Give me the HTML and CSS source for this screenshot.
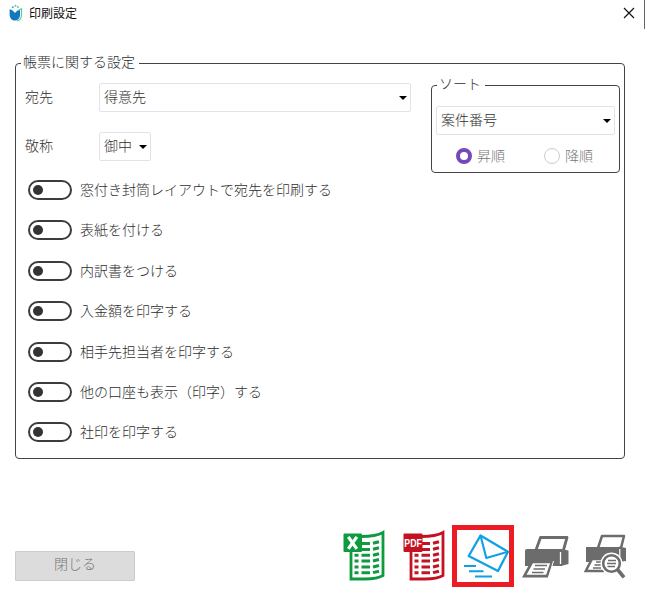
FILE: index.html
```html
<!DOCTYPE html>
<html lang="ja">
<head>
<meta charset="utf-8">
<title>印刷設定</title>
<link rel="stylesheet" href="styles.css">
</head>
<body>
<header class="titlebar">
  <svg class="logo" width="16" height="18" viewBox="0 0 16 18">
    <path d="M1.600 5.200C4 5.800 5.500 7 7 9C8.500 7 10 6 12 5.500V11.500C11.600 15 9.500 16.500 7 16.500C3.500 16.500 1.600 14 1.600 10Z" fill="#1478be"/>
    <circle cx="4.800" cy="3.200" r="1" fill="#3f9fd0"/><circle cx="7.500" cy="1.800" r="1" fill="#54bfd0"/><circle cx="10" cy="3" r="1" fill="#5cc9b0"/>
    <path d="M10 6.500L13.500 4.800V11C13.500 14 11.700 16.300 9 16.900" fill="none" stroke="#5cc9b0" stroke-width="1.200"/>
  </svg>
  <h1 class="title">印刷設定</h1>
  <svg class="close" width="12" height="12" viewBox="0 0 12 12"><path d="M1 1L11 11M11 1L1 11" stroke="#111" stroke-width="1.150"/></svg>
  <span class="edge"></span>
</header>
<main>
  <fieldset class="panel">
    <legend>帳票に関する設定</legend>
    <div class="top">
      <div class="fields">
        <div class="field"><span class="label">宛先</span><div class="select wide"><span>得意先</span><i class="caret"></i></div></div>
        <div class="field"><span class="label">敬称</span><div class="select small"><span>御中</span><i class="caret"></i></div></div>
      </div>
      <fieldset class="sort">
        <legend>ソート</legend>
        <div class="select"><span>案件番号</span><i class="caret"></i></div>
        <div class="radios">
          <span class="radio on"><i></i><span>昇順</span></span>
          <span class="radio"><i></i><span>降順</span></span>
        </div>
      </fieldset>
    </div>
    <ul class="toggles">
      <li><i class="switch"></i><span>窓付き封筒レイアウトで宛先を印刷する</span></li>
      <li><i class="switch"></i><span>表紙を付ける</span></li>
      <li><i class="switch"></i><span>内訳書をつける</span></li>
      <li><i class="switch"></i><span>入金額を印字する</span></li>
      <li><i class="switch"></i><span>相手先担当者を印字する</span></li>
      <li><i class="switch"></i><span>他の口座も表示（印字）する</span></li>
      <li><i class="switch"></i><span>社印を印字する</span></li>
    </ul>
  </fieldset>
</main>
<footer class="footer">
  <button class="close-button">閉じる</button>
  <div class="actions">
    <svg class="excel" width="43" height="52" viewBox="0 0 43 52" fill="none" stroke="#0f9a40">
      <path d="M18 6.500C28 6.500 34 6 40 2.500V45.500C35 48.500 30 49 22 49H8V20" stroke-width="2.800"/>
      <path d="M19 13.500H27M19 19.500H27M18.500 25.300H27M18.500 31H27M18.500 37H27M18.500 42.700H27M11.500 25.300H15.500M11.500 31H15.500M11.500 37H15.500M11.500 42.700H15.500" stroke-width="2.900"/>
      <path d="M30 13.300L36 11.800M30 19.300L36 17.800M30 25.200L36 23.700M30 31L36 29.500M30 37L36 35.500M30 42.600L36 41.200" stroke-width="3"/>
      <rect x=".5" y="3.500" width="18.500" height="18.500" rx="1" fill="#0f9a40" stroke="none"/>
      <path d="M5.300 6.800L13.800 18.800M13.800 6.800L5.300 18.800" stroke="#fff" stroke-width="3.200"/>
    </svg>
    <svg class="pdf" width="43" height="52" viewBox="0 0 43 52" fill="none" stroke="#c31322">
      <path d="M18 6.500C28 6.500 34 6 40 2.500V45.500C35 48.500 30 49 22 49H8V20" stroke-width="2.800"/>
      <path d="M19 13.500H27M19 19.500H27M18.500 25.300H27M18.500 31H27M18.500 37H27M18.500 42.700H27M11.500 25.300H15.500M11.500 31H15.500M11.500 37H15.500M11.500 42.700H15.500" stroke-width="2.900"/>
      <path d="M30 13.300L36 11.800M30 19.300L36 17.800M30 25.200L36 23.700M30 31L36 29.500M30 37L36 35.500M30 42.600L36 41.200" stroke-width="3"/>
      <rect x=".5" y="3.500" width="19" height="18.500" rx="1" fill="#c31322" stroke="none"/>
      <text class="pdf-text" x="1.300" y="17" textLength="17.500" lengthAdjust="spacingAndGlyphs">PDF</text>
    </svg>
    <span class="mail">
      <svg width="52" height="52" viewBox="0 0 52 52" fill="none" stroke="#10a0e6" stroke-width="2.300" stroke-linejoin="round">
        <path d="M23.500 5.500L51 21.800L41 41L11.700 26Z"/>
        <path d="M23.500 5.500L29.300 28L51 21.800" stroke-width="2.100"/>
        <path d="M7 36H19M12 41.200H26.500M18 46.500H35" stroke-width="2"/>
      </svg>
    </span>
    <svg class="printer" width="48" height="44" viewBox="0 0 48 44">
      <path d="M14 15L18.500 2.500H45L41.500 15" fill="#fff" stroke="#6c6c6c" stroke-width="2.800" stroke-linejoin="round"/>
      <path d="M5 14H40V31H3V16Q3 14 5 14Z" fill="#6c6c6c"/>
      <path d="M39 14L46.500 15.500V29L39 31Z" fill="#6c6c6c"/>
      <path d="M38.500 17V29" stroke="#fff" stroke-width="1.300"/>
      <path d="M10 27H30L25 41.200H2.200Z" fill="#fff" stroke="#6c6c6c" stroke-width="2.700"/>
      <path d="M31.500 26L26.500 42.500" stroke="#fff"/>
      <path d="M13 30.500H25M11.500 34H23M10 37.500H21.500" stroke="#6c6c6c" stroke-width="1.600"/>
    </svg>
    <svg class="preview" width="43" height="46" viewBox="0 0 43 46">
      <path d="M14 14L18 2H40L37 14" fill="#fff" stroke="#6c6c6c" stroke-width="2.500" stroke-linejoin="round"/>
      <path d="M2 13H36V28H2Z" fill="#6c6c6c"/>
      <path d="M35 12.500L42 14V27L35 28Z" fill="#6c6c6c"/>
      <path d="M35.800 15V26" stroke="#fff" stroke-width="1.200"/>
      <path d="M21 25H8L1.800 37H20" fill="#fff" stroke="#6c6c6c" stroke-width="2.400"/>
      <path d="M12 28H18M10.500 31H17M9 34H17" stroke="#6c6c6c" stroke-width="1.400"/>
      <circle cx="27.500" cy="29.500" r="11" fill="#fff"/>
      <path d="M33.500 35.500L40 43.300" stroke="#6c6c6c" stroke-width="3.600"/>
      <circle cx="27.500" cy="29.500" r="8.300" fill="#fff" stroke="#6c6c6c" stroke-width="2.600"/>
      <path d="M24 26.500H32M23 29.500H32M23.500 32.500H31" stroke="#6c6c6c" stroke-width="1.700"/>
    </svg>
  </div>
</footer>
</body>
</html>
```
FILE: styles.css
```css
* { box-sizing: border-box; }
body {
  margin: 0;
  width: 645px;
  height: 589px;
  overflow: hidden;
  background: #fff;
  color: #2e2e2e;
  font: 300 14px/20px "Noto Sans CJK JP", sans-serif;
}
.titlebar { display: flex; height: 28px; align-items: flex-start; }
.logo { margin: 4px 0 0 8px; }
.title { margin: 4px auto 0 5px; font-size: 12px; line-height: 18px; font-weight: 400; color: #111; }
.close { margin: 7px 9px 0 0; }
.edge { width: 1px; height: 29px; background: #666; }
main { padding: 26px 20px 0 15px; }
fieldset { margin: 0; padding: 0; border: 1px solid #444; border-radius: 4px; min-width: 0; }
legend { height: 19px; line-height: 14px; padding: 0 4px 5px 2px; margin-left: 5px; }
.panel { height: 405px; }
.top { display: flex; height: 107px; padding: 0 4px 0 9px; }
.fields { width: 406px; padding-top: 10px; }
.field { display: flex; height: 29px; margin-bottom: 20px; }
.label { width: 74px; line-height: 27px; }
.select {
  display: flex;
  align-items: center;
  justify-content: space-between;
  height: 29px;
  padding: 0 3px 0 4px;
  border: 1px solid #e2e2ea;
  border-radius: 2px;
  background: #fff;
}
.wide { width: 312px; }
.small { width: 52px; }
.select span { padding-bottom: 3px; }
.caret { border: 4px solid transparent; border-top-color: #000; border-bottom: 0; }
.sort { flex: 1; margin-top: 3px; height: 97px; padding: 0 4px; }
.sort legend { margin-left: 1px; }
.sort .select { margin-top: 11px; }
.radios { display: flex; gap: 39px; padding: 12px 0 0 20px; color: #777; }
.radio { display: flex; align-items: center; gap: 5px; height: 18px; }
.radio span, .toggles span { padding-bottom: 2px; }
.radio i { width: 16px; height: 16px; border: 1px solid #ccc; border-radius: 50%; }
.radio.on i { border: 4px solid #7549b9; }
.toggles { margin: 0; padding: 0 0 0 12px; list-style: none; }
.toggles li { display: flex; align-items: center; gap: 8px; height: 20px; margin-bottom: 20.400px; }
.switch {
  display: flex;
  align-items: center;
  width: 44px;
  height: 20px;
  padding-left: 3px;
  border: 2px solid #3c3c3c;
  border-radius: 10px;
}
.switch::before { content: ""; width: 10px; height: 10px; border-radius: 50%; background: #333; }
.footer { display: flex; justify-content: space-between; padding: 66px 0 0 15px; }
.close-button {
  width: 120px;
  height: 30px;
  margin-top: 26px;
  padding: 0 0 6px;
  border: 1px solid #ccc;
  border-radius: 1px;
  background: #dcdcdc;
  color: #777;
  font: inherit;
}
.actions { display: flex; align-items: flex-start; width: 302px; }
.excel { margin-top: 5px; }
.pdf { margin: 5px 0 0 17px; }
.pdf-text { font: 700 11px "Liberation Sans", sans-serif; fill: #fff; stroke: none; }
.mail { display: flex; width: 62px; height: 62px; margin-left: 6px; border: 5px solid #ed1c24; }
.printer { margin: 10px 0 0 8px; }
.preview { margin: 9px 0 0 14px; }
```
